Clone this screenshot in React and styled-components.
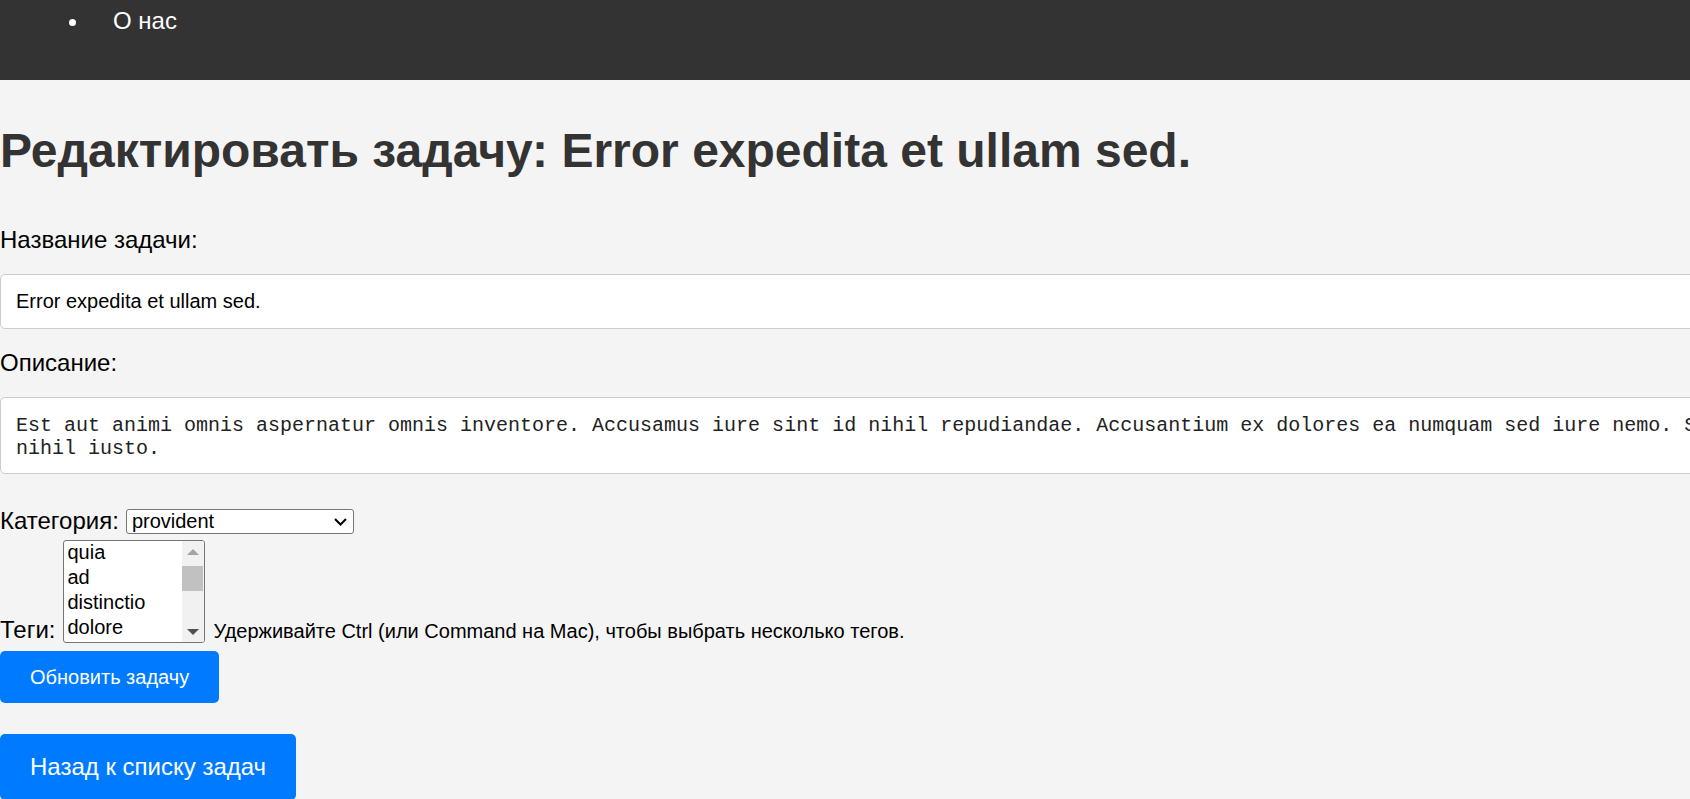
import styled, { createGlobalStyle } from "styled-components";

const GlobalStyle = createGlobalStyle`
  html, body {
    margin: 0;
    padding: 0;
    overflow: hidden;
    background: #f4f4f4;
    font-family: "Liberation Sans", Arial, sans-serif;
  }
`;

const Header = styled.header`
  height: 80px;
  box-sizing: border-box;
  padding-top: 7px;
  background: #333;
`;

const NavList = styled.ul`
  display: flex;
  margin: 0;
  padding: 0 0 0 69px;
  list-style: none;
`;

const NavItem = styled.li`
  display: flex;
  align-items: center;
  color: #fff;
  font-size: 24px;
  line-height: 27px;

  &::before {
    content: "";
    width: 7px;
    height: 7px;
    margin: 3px 37px 0 0;
    border-radius: 50%;
    background: #fff;
  }
`;

const Main = styled.main`
  width: 1816px;
`;

const Title = styled.h1`
  margin: 43px 0 48px;
  color: #333;
  font-size: 48px;
  line-height: 55px;
  font-weight: bold;
`;

const Label = styled.label`
  display: block;
  margin-bottom: 21px;
  color: #000;
  font-size: 24px;
  line-height: 27px;
`;

const InlineLabel = styled.label`
  color: #000;
  font-size: 24px;
  line-height: 27px;
`;

const TextInput = styled.input`
  display: block;
  width: 100%;
  margin: 0 0 20px;
  padding: 15px;
  border: 1px solid #ccc;
  border-radius: 5px;
  background: #fff;
  color: #000;
  font-family: "Liberation Sans", Arial, sans-serif;
  font-size: 20px;
  line-height: 23px;
  outline: none;
`;

const TextArea = styled.textarea`
  display: block;
  width: 100%;
  margin: 0 0 33px;
  padding: 17px 15px 13px;
  border: 1px solid #ccc;
  border-radius: 5px;
  background: #fff;
  color: #222;
  font-family: "Liberation Mono", "Courier New", monospace;
  font-size: 20px;
  line-height: 22.6px;
  resize: none;
  overflow: hidden;
  outline: none;
`;

const Row = styled.div`
  display: flex;
  align-items: flex-end;
  margin-bottom: ${(p) => p.$gap || 0}px;
`;

const Dropdown = styled.div`
  display: flex;
  align-items: center;
  justify-content: space-between;
  width: 228px;
  height: 25px;
  box-sizing: border-box;
  margin-left: 7px;
  padding: 0 6px 0 5px;
  border: 1px solid #767676;
  border-radius: 3px;
  background: #fff;
  color: #000;
  font-size: 20px;
  line-height: 23px;
`;

const ListBox = styled.div`
  display: flex;
  width: 142px;
  height: 103px;
  box-sizing: border-box;
  margin-left: 7px;
  border: 1px solid #767676;
  border-radius: 3px;
  background: #fff;
  overflow: hidden;
`;

const Options = styled.ul`
  flex: 1;
  margin: 0;
  padding: 0;
  list-style: none;
`;

const Option = styled.li`
  height: 25px;
  box-sizing: border-box;
  padding: 0 4px 2px;
  color: #000;
  font-size: 20px;
  line-height: 23px;
`;

const Scrollbar = styled.div`
  display: flex;
  flex-direction: column;
  align-items: center;
  width: 22px;
  background: #f1f1f1;
`;

const ArrowButton = styled.div`
  display: flex;
  align-items: center;
  justify-content: center;
  height: 21px;
  width: 100%;

  &::after {
    content: "";
    border-left: 6px solid transparent;
    border-right: 6px solid transparent;
    ${(p) =>
      p.$down
        ? `border-top: 6px solid #505050;`
        : `border-bottom: 6px solid #a3a3a3;`}
  }
`;

const Track = styled.div`
  flex: 1;
  width: 100%;
  padding-top: 4px;
  box-sizing: border-box;
`;

const Thumb = styled.div`
  width: 21px;
  height: 25px;
  background: #c1c1c1;
`;

const Hint = styled.span`
  margin-left: 9px;
  color: #000;
  font-size: 20px;
  line-height: 23px;
`;

const Button = styled.button`
  display: block;
  margin-top: ${(p) => p.$top}px;
  padding: ${(p) => (p.$large ? "19px 30px" : "15px 30px 14px")};
  border: none;
  border-radius: 5px;
  background: #007bff;
  color: #fff;
  font-family: "Liberation Sans", Arial, sans-serif;
  font-size: ${(p) => (p.$large ? 24 : 20)}px;
  line-height: ${(p) => (p.$large ? 28 : 23)}px;
  cursor: pointer;
`;

const tags = ["quia", "ad", "distinctio", "dolore"];

const App = () => {
  return (
    <>
      <GlobalStyle />
      <Header>
        <NavList>
          <NavItem>О нас</NavItem>
        </NavList>
      </Header>
      <Main>
        <Title>Редактировать задачу: Error expedita et ullam sed.</Title>
        <form onSubmit={(e) => e.preventDefault()}>
          <Label htmlFor="title">Название задачи:</Label>
          <TextInput id="title" defaultValue="Error expedita et ullam sed." />
          <Label htmlFor="description">Описание:</Label>
          <TextArea
            id="description"
            rows={2}
            defaultValue="Est aut animi omnis aspernatur omnis inventore. Accusamus iure sint id nihil repudiandae. Accusantium ex dolores ea numquam sed iure nemo. Sequi quo nihil iusto."
          />
          <Row $gap={6}>
            <InlineLabel>Категория:</InlineLabel>
            <Dropdown>
              <span>provident</span>
              <svg width="13" height="8" viewBox="0 0 13 8">
                <polyline
                  points="1,1 6.5,6.5 12,1"
                  fill="none"
                  stroke="#000"
                  strokeWidth="2"
                />
              </svg>
            </Dropdown>
          </Row>
          <Row>
            <InlineLabel>Теги:</InlineLabel>
            <ListBox>
              <Options>
                {tags.map((t) => (
                  <Option key={t}>{t}</Option>
                ))}
              </Options>
              <Scrollbar>
                <ArrowButton />
                <Track>
                  <Thumb />
                </Track>
                <ArrowButton $down />
              </Scrollbar>
            </ListBox>
            <Hint>Удерживайте Ctrl (или Command на Mac), чтобы выбрать несколько тегов.</Hint>
          </Row>
          <Button type="submit" $top={8}>Обновить задачу</Button>
        </form>
        <Button $large $top={31}>Назад к списку задач</Button>
      </Main>
    </>
  );
};

export default App;
